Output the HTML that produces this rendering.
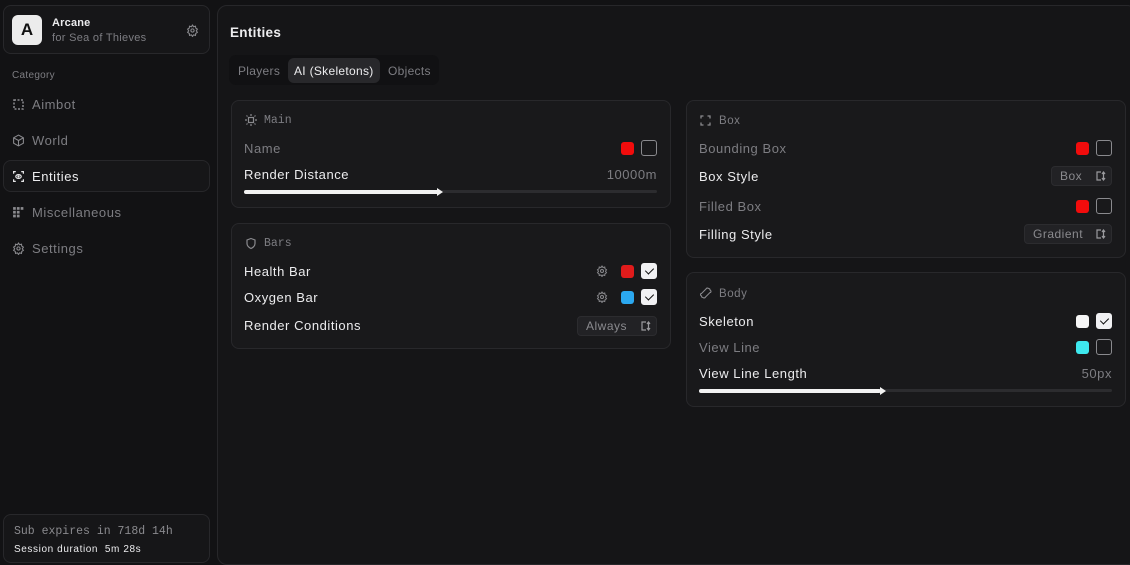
<!DOCTYPE html>
<html><head><meta charset="utf-8"><style>
*{box-sizing:border-box;margin:0;padding:0}
body{width:1130px;height:564px;background:#121214;font-family:"Liberation Sans",sans-serif;position:relative;overflow:hidden;color:#e8e8ea}
.abs{position:absolute}
.card{position:absolute;border:1px solid #28282b;border-radius:8px;background:#19191b}
.t{position:absolute;font-size:13px;white-space:nowrap;line-height:16px;letter-spacing:0.55px}
.r{text-align:right}
.w{color:#ececee}
.g{color:#7d7d82}
.mono{font-family:"Liberation Mono",monospace;letter-spacing:0}
.sw{position:absolute;width:13px;height:13px;border-radius:3px}
.cb{position:absolute;width:16px;height:16px;border:1px solid #8a8a8e;border-radius:3px}
.cb.on{background:#f1f1f3;border-color:#f1f1f3}
.cb.on::after{content:"";position:absolute;left:5px;top:2px;width:4px;height:7px;border:solid #111;border-width:0 1.6px 1.6px 0;transform:rotate(45deg)}
.sel{position:absolute;height:20px;background:#222225;border:1px solid #2c2c2f;border-radius:4px;font-size:12px;color:#8a8a8e;line-height:18px;padding-left:8px;letter-spacing:0.5px}
.sel svg{position:absolute;right:5px;top:4px}
.track{position:absolute;height:3px;background:#2c2c2f;border-radius:2px}
.fill{position:absolute;height:4px;background:#f2f2f2;border-radius:2px}
</style></head><body>
<div class="card" style="left:3px;top:5px;width:207px;height:49px;background:#161618"></div>
<div class="abs" style="left:12px;top:15px;width:30px;height:30px;background:#ececec;border-radius:6px;color:#111;font-weight:bold;font-size:17px;text-align:center;line-height:30px">A</div>
<div class="t w" style="left:52px;top:15px;font-size:11px;font-weight:bold;letter-spacing:0.2px">Arcane</div>
<div class="t g" style="left:52px;top:30px;font-size:11px;letter-spacing:0.3px">for Sea of Thieves</div>
<svg class="abs" style="left:186px;top:24px" width="13" height="13" viewBox="0 0 24 24" fill="none" stroke="#8a8a8e" stroke-width="2"><circle cx="12" cy="12" r="3"/><path d="M12 2l2 3 3.5-1 .5 3.5 3 2-2 3 2 3-3 2-.5 3.5-3.5-1-2 3-2-3-3.5 1-.5-3.5-3-2 2-3-2-3 3-2 .5-3.5 3.5 1z"/></svg>
<div class="t g" style="left:12px;top:68px;font-size:10px;letter-spacing:0.3px">Category</div>
<div class="abs" style="left:3px;top:160px;width:207px;height:32px;border:1px solid #27272a;border-radius:8px;background:#161618"></div>
<svg class="abs" style="left:13px;top:99px" width="11" height="11"><rect x="1" y="1" width="9" height="9" fill="none" stroke="#8a8a8e" stroke-width="1.5" stroke-dasharray="2 1.5"/></svg>
<div class="t g" style="left:32px;top:97px">Aimbot</div>
<svg class="abs" style="left:12px;top:134px" width="13" height="13" viewBox="0 0 24 24" fill="none" stroke="#8a8a8e" stroke-width="2"><path d="M12 2l9 5v10l-9 5-9-5V7z M3 7l9 5 9-5 M12 12v10"/></svg>
<div class="t g" style="left:32px;top:133px">World</div>
<svg class="abs" style="left:12px;top:170px" width="13" height="13" viewBox="0 0 24 24" fill="none" stroke="#e8e8ea" stroke-width="2.2"><path d="M3 7V3h4 M17 3h4v4 M21 17v4h-4 M7 21H3v-4"/><ellipse cx="12" cy="12" rx="5" ry="3.5"/><circle cx="12" cy="12" r="1"/></svg>
<div class="t w" style="left:32px;top:169px">Entities</div>
<svg class="abs" style="left:12px;top:206px" width="13" height="13" viewBox="0 0 24 24" fill="#8a8a8e"><rect x="2" y="2" width="5" height="5"/><rect x="9" y="2" width="5" height="5"/><rect x="16" y="2" width="5" height="5"/><rect x="2" y="9" width="5" height="5"/><rect x="9" y="9" width="5" height="5"/><rect x="2" y="16" width="5" height="5"/><rect x="9" y="16" width="5" height="5"/></svg>
<div class="t g" style="left:32px;top:205px">Miscellaneous</div>
<svg class="abs" style="left:12px;top:242px" width="13" height="13" viewBox="0 0 24 24" fill="none" stroke="#8a8a8e" stroke-width="2"><circle cx="12" cy="12" r="3"/><path d="M12 2l2 3 3.5-1 .5 3.5 3 2-2 3 2 3-3 2-.5 3.5-3.5-1-2 3-2-3-3.5 1-.5-3.5-3-2 2-3-2-3 3-2 .5-3.5 3.5 1z"/></svg>
<div class="t g" style="left:32px;top:241px">Settings</div>
<div class="card" style="left:3px;top:514px;width:207px;height:49px;background:#161618"></div>
<div class="t g mono" style="left:14px;top:524px;font-size:11.5px;color:#8a8a8e">Sub expires in 718d 14h</div>
<div class="t w" style="left:14px;top:542px;font-size:10px;letter-spacing:0.6px">Session duration&nbsp; 5m 28s</div>
<div class="abs" style="left:217px;top:5px;width:920px;height:560px;border:1px solid #27272a;border-radius:10px;background:#151517"></div>
<div class="t w" style="left:230px;top:25px;font-weight:bold;font-size:13.5px;letter-spacing:0.3px">Entities</div>
<div class="abs" style="left:229px;top:55px;width:210px;height:30px;background:#111113;border-radius:7px"></div>
<div class="abs" style="left:288px;top:58px;width:92px;height:25px;background:#28282b;border-radius:6px"></div>
<div class="t g" style="left:238px;top:63px;font-size:12px;letter-spacing:0.3px">Players</div>
<div class="t w" style="left:294px;top:63px;font-size:12px;letter-spacing:0.3px">AI (Skeletons)</div>
<div class="t g" style="left:388px;top:63px;font-size:12px;letter-spacing:0.3px">Objects</div>
<div class="card" style="left:231px;top:100px;width:440px;height:108px"></div>
<svg class="abs" style="left:245px;top:114px" width="12" height="12" viewBox="0 0 12 12" fill="none" stroke="#8a8a8e" stroke-width="1.2"><rect x="3.5" y="3.5" width="5" height="5"/><path d="M6 0v2M6 10v2M0 6h2M10 6h2M1.5 1.5l1 1M9.5 9.5l1 1M1.5 10.5l1-1M9.5 2.5l1-1"/></svg>
<div class="t g mono" style="left:264px;top:113px;font-size:11.5px">Main</div>
<div class="t g" style="left:244px;top:141px">Name</div>
<div class="sw" style="left:621px;top:142px;background:#f20c0c"></div>
<div class="cb" style="left:641px;top:140px"></div>
<div class="t w" style="left:244px;top:167px">Render Distance</div>
<div class="t g r" style="right:473px;top:167px">10000m</div>
<div class="track" style="left:244px;top:190px;width:413px"></div>
<div class="fill" style="left:244px;top:190px;width:196px"></div>
<div class="abs" style="left:437px;top:188px;width:0;height:0;border-left:6px solid #f2f2f2;border-top:4px solid transparent;border-bottom:4px solid transparent"></div>
<div class="card" style="left:231px;top:223px;width:440px;height:126px"></div>
<svg class="abs" style="left:245px;top:237px" width="12" height="13" viewBox="0 0 24 24" fill="none" stroke="#8a8a8e" stroke-width="2.4"><path d="M12 2l8 3v7c0 5-4 8-8 10-4-2-8-5-8-10V5z"/></svg>
<div class="t g mono" style="left:264px;top:236px;font-size:11.5px">Bars</div>
<div class="t w" style="left:244px;top:264px">Health Bar</div>
<div class="t w" style="left:244px;top:290px">Oxygen Bar</div>
<div class="t w" style="left:244px;top:318px">Render Conditions</div>
<svg class="abs" style="left:596px;top:265px" width="12" height="12" viewBox="0 0 24 24" fill="none" stroke="#8a8a8e" stroke-width="2"><circle cx="12" cy="12" r="3"/><path d="M12 2l2 3 3.5-1 .5 3.5 3 2-2 3 2 3-3 2-.5 3.5-3.5-1-2 3-2-3-3.5 1-.5-3.5-3-2 2-3-2-3 3-2 .5-3.5 3.5 1z"/></svg>
<svg class="abs" style="left:596px;top:291px" width="12" height="12" viewBox="0 0 24 24" fill="none" stroke="#8a8a8e" stroke-width="2"><circle cx="12" cy="12" r="3"/><path d="M12 2l2 3 3.5-1 .5 3.5 3 2-2 3 2 3-3 2-.5 3.5-3.5-1-2 3-2-3-3.5 1-.5-3.5-3-2 2-3-2-3 3-2 .5-3.5 3.5 1z"/></svg>
<div class="sw" style="left:621px;top:265px;background:#e01b1b"></div>
<div class="cb on" style="left:641px;top:263px"></div>
<div class="sw" style="left:621px;top:291px;background:#2ba8f0"></div>
<div class="cb on" style="left:641px;top:289px"></div>
<div class="sel" style="left:577px;top:316px;width:80px">Always<svg width="10" height="10" viewBox="0 0 10 10" fill="none" stroke="#9a9a9e" stroke-width="1.2"><path d="M5 1H1v8h4M7.5 1v8M6 3l1.5-2L9 3M6 7l1.5 2L9 7"/></svg></div>
<div class="card" style="left:686px;top:100px;width:440px;height:158px"></div>
<svg class="abs" style="left:700px;top:115px" width="11" height="11" viewBox="0 0 11 11" fill="none" stroke="#8a8a8e" stroke-width="1.3"><path d="M1 3.5V1h2.5M7.5 1H10v2.5M10 7.5V10H7.5M3.5 10H1V7.5"/></svg>
<div class="t g" style="left:719px;top:113px;font-size:11.5px">Box</div>
<div class="t g" style="left:699px;top:141px">Bounding Box</div>
<div class="sw" style="left:1076px;top:142px;background:#f20c0c"></div>
<div class="cb" style="left:1096px;top:140px"></div>
<div class="t w" style="left:699px;top:169px">Box Style</div>
<div class="sel" style="left:1051px;top:166px;width:61px">Box<svg width="10" height="10" viewBox="0 0 10 10" fill="none" stroke="#9a9a9e" stroke-width="1.2"><path d="M5 1H1v8h4M7.5 1v8M6 3l1.5-2L9 3M6 7l1.5 2L9 7"/></svg></div>
<div class="t g" style="left:699px;top:199px">Filled Box</div>
<div class="sw" style="left:1076px;top:200px;background:#f20c0c"></div>
<div class="cb" style="left:1096px;top:198px"></div>
<div class="t w" style="left:699px;top:227px">Filling Style</div>
<div class="sel" style="left:1024px;top:224px;width:88px">Gradient<svg width="10" height="10" viewBox="0 0 10 10" fill="none" stroke="#9a9a9e" stroke-width="1.2"><path d="M5 1H1v8h4M7.5 1v8M6 3l1.5-2L9 3M6 7l1.5 2L9 7"/></svg></div>
<div class="card" style="left:686px;top:272px;width:440px;height:135px"></div>
<svg class="abs" style="left:700px;top:287px" width="12" height="12" viewBox="0 0 24 24" fill="none" stroke="#8a8a8e" stroke-width="2.2"><path d="M17 3a3 3 0 013 3 3 3 0 011 5l-1 0-9 9a3 3 0 01-5 1 3 3 0 01-3-3 3 3 0 01-1-5l1 0 9-9a3 3 0 015-1z"/></svg>
<div class="t g" style="left:719px;top:286px;font-size:11.5px">Body</div>
<div class="t w" style="left:699px;top:314px">Skeleton</div>
<div class="sw" style="left:1076px;top:315px;background:#f6f6f6"></div>
<div class="cb on" style="left:1096px;top:313px"></div>
<div class="t g" style="left:699px;top:340px">View Line</div>
<div class="sw" style="left:1076px;top:341px;background:#3ee8ee"></div>
<div class="cb" style="left:1096px;top:339px"></div>
<div class="t w" style="left:699px;top:366px">View Line Length</div>
<div class="t g r" style="right:18px;top:366px">50px</div>
<div class="track" style="left:699px;top:389px;width:413px"></div>
<div class="fill" style="left:699px;top:389px;width:182px"></div>
<div class="abs" style="left:880px;top:387px;width:0;height:0;border-left:6px solid #f2f2f2;border-top:4px solid transparent;border-bottom:4px solid transparent"></div>
</body></html>
